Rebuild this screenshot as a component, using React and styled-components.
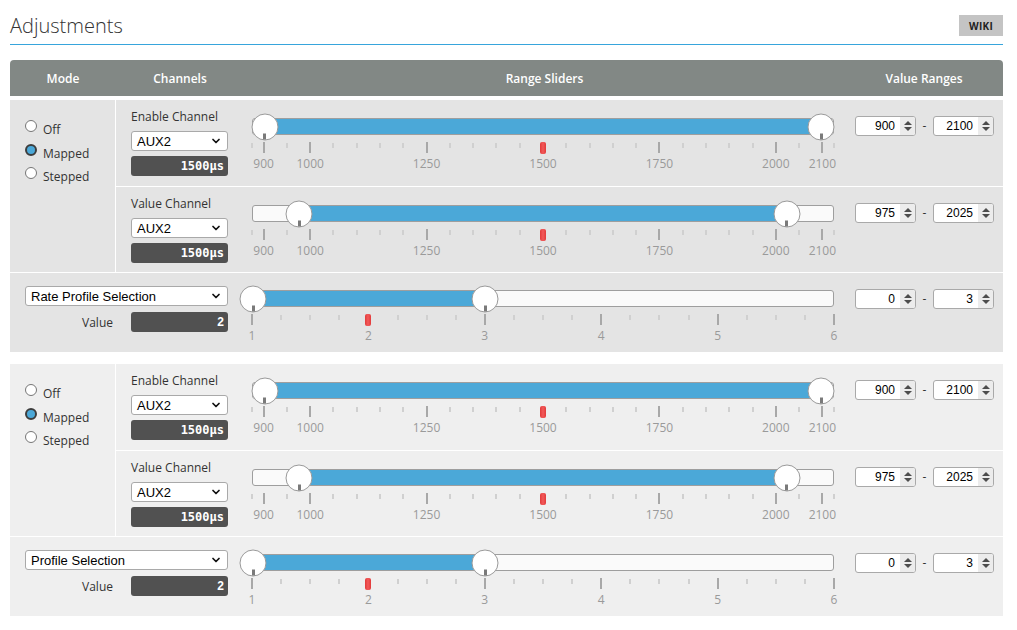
import React from "react";
import styled, { createGlobalStyle } from "styled-components";
import { ChevronDown } from "lucide-react";

const GlobalStyle = createGlobalStyle`
	html, body {
		margin: 0;
		padding: 0;
		background: #fff;
	}
	body {
		font-family: "Open Sans", "Liberation Sans", Arial, sans-serif;
		font-size: 12px;
		color: #333;
	}
	* {
		box-sizing: border-box;
	}
`;

const Page = styled.div`
	width: 1003px;
	padding: 0 0 15px 10px;
`;

const TitleBar = styled.div`
	height: 45px;
	padding-top: 14px;
	display: flex;
	justify-content: space-between;
	align-items: flex-start;
	border-bottom: 1px solid #37a5dc;
`;

const Title = styled.h1`
	margin: 0;
	font-size: 20px;
	font-weight: 300;
	line-height: 24px;
	color: #333;
`;

const WikiButton = styled.a`
	margin-top: 1px;
	width: 44px;
	height: 21px;
	display: flex;
	align-items: center;
	justify-content: center;
	background: #c4c4c4;
	color: #222;
	font-size: 10px;
	font-weight: 700;
	letter-spacing: 0.3px;
`;

const HeaderBar = styled.div`
	margin-top: 15px;
	height: 36px;
	display: grid;
	grid-template-columns: 106px 128px 601px 1fr;
	align-items: center;
	background: #828885;
	border-radius: 4px 4px 0 0;
`;

const HeaderCell = styled.div`
	text-align: center;
	color: #fff;
	font-weight: 600;
	font-size: 12px;
`;

const Block = styled.section`
	margin-top: ${(p) => p.$gap}px;
	background: ${(p) => p.$bg};
`;

const TopSection = styled.div`
	display: flex;
	border-bottom: 1px solid #fff;
`;

const ModeCell = styled.div`
	width: 106px;
	border-right: 1px solid #fff;
	padding: 20px 0 0 15px;
	display: flex;
	flex-direction: column;
`;

const ModeOption = styled.label`
	height: 23.5px;
	display: flex;
	align-items: flex-start;
	gap: 6px;
`;

const Radio = styled.span`
	width: 12px;
	height: 12px;
	border-radius: 50%;
	flex: none;
	background: ${(p) => (p.$checked ? "#4ba8d8" : "#fff")};
	border: ${(p) => (p.$checked ? "2px solid #3d3d3d" : "1px solid #767676")};
`;

const RadioLabel = styled.span`
	margin-top: 2px;
	line-height: 16px;
	color: #333;
`;

const ChannelRows = styled.div`
	flex: 1;
	display: flex;
	flex-direction: column;
`;

const ChannelRow = styled.div`
	height: 85px;
	display: flex;
	&:first-child {
		height: 87px;
		border-bottom: 1px solid #fff;
	}
`;

const ChannelCell = styled.div`
	width: 124px;
	padding: 8px 12px 0 15px;
	display: flex;
	flex-direction: column;
	gap: 5px;
`;

const FieldLabel = styled.div`
	line-height: 18px;
	color: #333;
`;

const SelectBox = styled.div`
	width: ${(p) => p.$width}px;
	height: 20px;
	padding: 0 5px 0 5px;
	display: flex;
	align-items: center;
	justify-content: space-between;
	background: #fff;
	border: 1px solid #a9a9a9;
	border-radius: 3px;
	font-family: "Liberation Sans", Arial, sans-serif;
	font-size: 13px;
	color: #000;
`;

const ValueBox = styled.div`
	width: 97px;
	height: 20px;
	padding-right: 4px;
	background: #515151;
	border-radius: 3px;
	color: #fff;
	text-align: right;
	line-height: 20px;
	font-family: ${(p) => (p.$mono ? '"DejaVu Sans Mono", "Liberation Mono", monospace' : '"Liberation Sans", Arial, sans-serif')};
	font-size: 12px;
	font-weight: 700;
`;

const SliderCell = styled.div`
	width: 605px;
	padding: ${(p) => p.$top}px 11px 0 12px;
`;

const Track = styled.div`
	position: relative;
	height: 17px;
	background: #fafafa;
	border: 1px solid #9e9e9e;
	border-radius: 3px;
`;

const Fill = styled.div`
	position: absolute;
	top: 0;
	bottom: 0;
	background: #4ba8d8;
`;

const Handle = styled.div`
	position: absolute;
	top: 50%;
	width: 27px;
	height: 27px;
	transform: translate(-50%, -50%);
	border-radius: 50%;
	background: #fff;
	border: 1px solid #9a9a9a;
	&::after {
		content: "";
		position: absolute;
		left: 50%;
		bottom: 0;
		width: 3px;
		height: 6px;
		transform: translateX(-50%);
		background: #7a7a7a;
	}
`;

const Pips = styled.div`
	position: relative;
	height: 34px;
	margin-top: 7px;
`;

const Tick = styled.span`
	position: absolute;
	top: ${(p) => (p.$major ? 0 : 1)}px;
	width: 2px;
	height: ${(p) => (p.$major ? 11 : 5)}px;
	transform: translateX(-50%);
	background: ${(p) => (p.$major ? "#a8a8a8" : "#d0d0d0")};
`;

const PipLabel = styled.span`
	position: absolute;
	top: 14px;
	transform: translateX(-50%);
	line-height: 16px;
	font-size: 12px;
	color: #9a9a9a;
`;

const Marker = styled.span`
	position: absolute;
	top: 0;
	width: 6px;
	height: 12px;
	transform: translateX(-50%);
	border-radius: 2px;
	background: linear-gradient(90deg, #e23a3a 0%, #f25a5a 50%, #e23a3a 100%);
`;

const RangeCell = styled.div`
	flex: 1;
	padding: 16px 0 0 10px;
	display: flex;
	align-items: flex-start;
	gap: 6px;
`;

const NumberBox = styled.div`
	width: 61px;
	height: 20px;
	display: flex;
	background: #fff;
	border: 1px solid #a9a9a9;
	border-radius: 3px;
	overflow: hidden;
`;

const NumberValue = styled.span`
	flex: 1;
	padding-right: 5px;
	text-align: right;
	line-height: 18px;
	font-family: "Liberation Sans", Arial, sans-serif;
	font-size: 12px;
	color: #000;
`;

const Spinner = styled.span`
	width: 15px;
	display: flex;
	flex-direction: column;
	align-items: center;
	justify-content: center;
	gap: 2px;
	background: #ececec;
`;

const SpinArrow = styled.span`
	width: 0;
	height: 0;
	border-left: 4px solid transparent;
	border-right: 4px solid transparent;
	${(p) => (p.$up ? "border-bottom: 4px solid #4d4d4d;" : "border-top: 4px solid #4d4d4d;")}
`;

const Dash = styled.span`
	width: 5px;
	line-height: 20px;
	color: #333;
	text-align: center;
`;

const ProfileRow = styled.div`
	height: 79px;
	display: flex;
`;

const ProfileCell = styled.div`
	width: 230px;
	padding: 13px 12px 0 15px;
	display: flex;
	flex-direction: column;
	gap: 6px;
`;

const ValueLine = styled.div`
	display: grid;
	grid-template-columns: 1fr 97px;
	gap: 18px;
	align-items: center;
`;

const ValueLabel = styled.span`
	text-align: right;
	color: #333;
`;

// scales
const channelMajors = [900, 1000, 1250, 1500, 1750, 2000, 2100];
const channelMinors = [875, 2125];
for (let v = 950; v <= 2050; v += 50) {
	if (!channelMajors.includes(v)) channelMinors.push(v);
}
const channelScale = { min: 875, max: 2125, majors: channelMajors, minors: channelMinors };

const rateMajors = [1, 2, 3, 4, 5, 6];
const rateMinors = [];
for (let v = 1.25; v < 6; v += 0.25) {
	if (!Number.isInteger(v)) rateMinors.push(v);
}
const rateScale = { min: 1, max: 6, majors: rateMajors, minors: rateMinors };

const pct = (scale, v) => ((v - scale.min) / (scale.max - scale.min)) * 100;

const Slider = ({ scale, from, to, marker, top }) => (
	<SliderCell $top={top}>
		<Track>
			<Fill style={{ left: `${pct(scale, from)}%`, width: `${pct(scale, to) - pct(scale, from)}%` }} />
			<Handle style={{ left: `${pct(scale, from)}%` }} />
			<Handle style={{ left: `${pct(scale, to)}%` }} />
		</Track>
		<Pips>
			{scale.minors.map((v) => (
				<Tick key={`m${v}`} style={{ left: `${pct(scale, v)}%` }} />
			))}
			{scale.majors.map((v) =>
				v === marker ? null : <Tick key={`M${v}`} $major style={{ left: `${pct(scale, v)}%` }} />
			)}
			<Marker style={{ left: `${pct(scale, marker)}%` }} />
			{scale.majors.map((v) => (
				<PipLabel key={`l${v}`} style={{ left: `${pct(scale, v)}%` }}>
					{v}
				</PipLabel>
			))}
		</Pips>
	</SliderCell>
);

const NumberField = ({ value }) => (
	<NumberBox>
		<NumberValue>{value}</NumberValue>
		<Spinner>
			<SpinArrow $up />
			<SpinArrow />
		</Spinner>
	</NumberBox>
);

const Ranges = ({ low, high }) => (
	<RangeCell>
		<NumberField value={low} />
		<Dash>-</Dash>
		<NumberField value={high} />
	</RangeCell>
);

const Select = ({ width, children }) => (
	<SelectBox $width={width}>
		<span>{children}</span>
		<ChevronDown size={12} strokeWidth={3.5} color="#111" />
	</SelectBox>
);

const channelRows = [
	{ label: "Enable Channel", from: 900, to: 2100 },
	{ label: "Value Channel", from: 975, to: 2025 },
];

const blocks = [
	{ id: 1, bg: "#e4e4e4", gap: 4, profile: "Rate Profile Selection" },
	{ id: 2, bg: "#efefef", gap: 12, profile: "Profile Selection" },
];

const modes = ["Off", "Mapped", "Stepped"];

const AdjustmentBlock = ({ data }) => (
	<Block $bg={data.bg} $gap={data.gap}>
		<TopSection>
			<ModeCell>
				{modes.map((m) => (
					<ModeOption key={m}>
						<Radio $checked={m === "Mapped"} />
						<RadioLabel>{m}</RadioLabel>
					</ModeOption>
				))}
			</ModeCell>
			<ChannelRows>
				{channelRows.map((r) => (
					<ChannelRow key={r.label}>
						<ChannelCell>
							<FieldLabel>{r.label}</FieldLabel>
							<Select width={97}>AUX2</Select>
							<ValueBox $mono>1500µs</ValueBox>
						</ChannelCell>
						<Slider scale={channelScale} from={r.from} to={r.to} marker={1500} top={18} />
						<Ranges low={r.from} high={r.to} />
					</ChannelRow>
				))}
			</ChannelRows>
		</TopSection>
		<ProfileRow>
			<ProfileCell>
				<Select width={203}>{data.profile}</Select>
				<ValueLine>
					<ValueLabel>Value</ValueLabel>
					<ValueBox>2</ValueBox>
				</ValueLine>
			</ProfileCell>
			<Slider scale={rateScale} from={1} to={3} marker={2} top={17} />
			<Ranges low={0} high={3} />
		</ProfileRow>
	</Block>
);

const App = () => (
	<>
		<GlobalStyle />
		<Page>
			<TitleBar>
				<Title>Adjustments</Title>
				<WikiButton>WIKI</WikiButton>
			</TitleBar>
			<HeaderBar>
				<HeaderCell>Mode</HeaderCell>
				<HeaderCell>Channels</HeaderCell>
				<HeaderCell>Range Sliders</HeaderCell>
				<HeaderCell>Value Ranges</HeaderCell>
			</HeaderBar>
			{blocks.map((b) => (
				<AdjustmentBlock key={b.id} data={b} />
			))}
		</Page>
	</>
);

export default App;
